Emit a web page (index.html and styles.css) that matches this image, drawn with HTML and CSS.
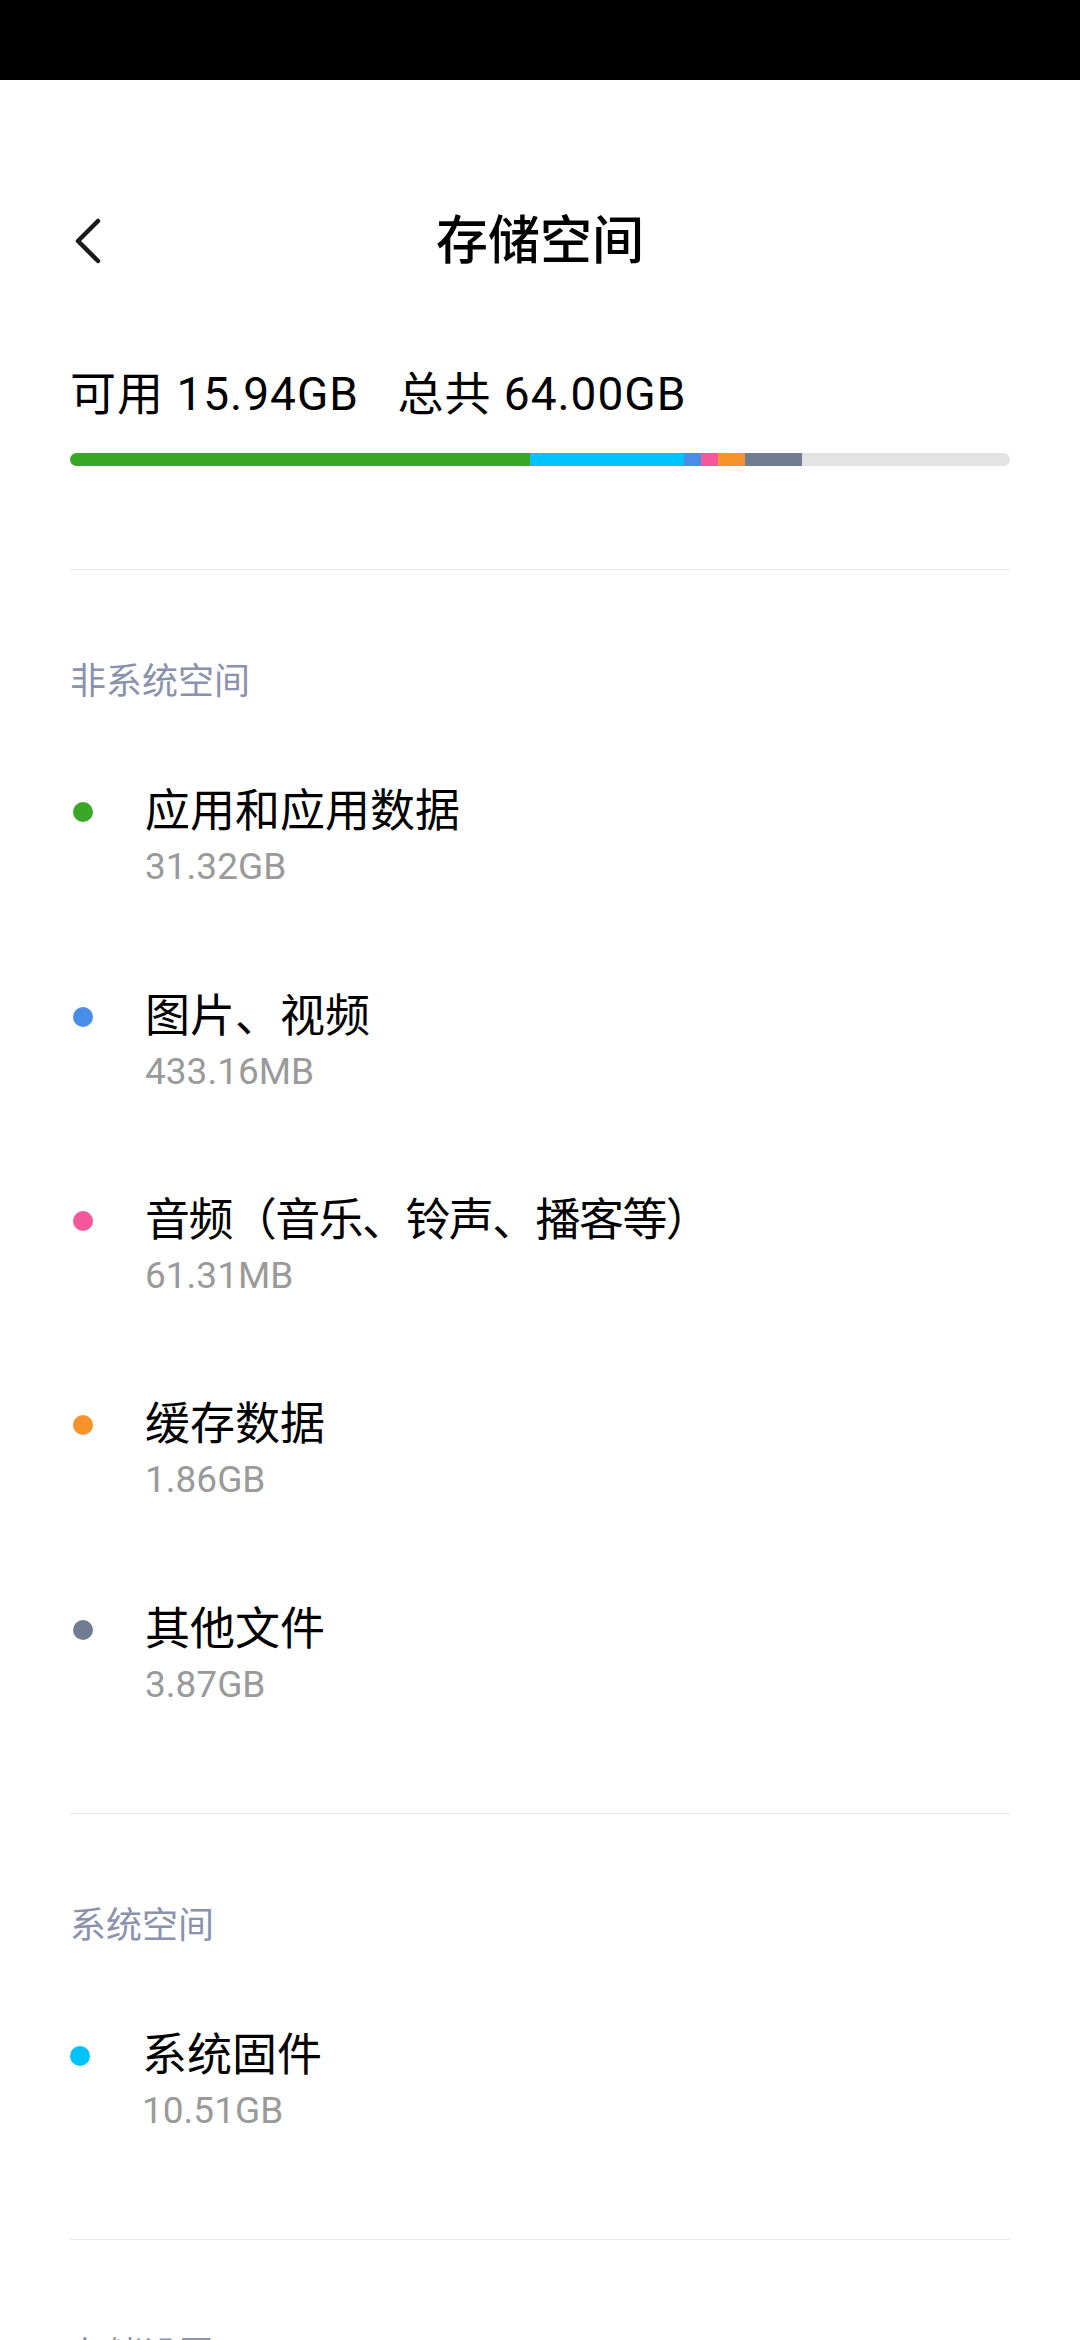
FILE: index.html
```html
<!DOCTYPE html>
<html lang="zh-CN">
<head>
  <meta charset="UTF-8" />
  <title>存储空间</title>
  <link rel="stylesheet" href="styles.css">
</head>
<body>

  <div class="status-bar"></div>

  <div class="page">
    <div class="nav-bar">
      <span class="back-btn">
        <svg width="34" height="48" viewBox="0 0 34 48">
          <path d="M28 4 L8 24 L28 44" fill="none" stroke="#1a1a1a" stroke-width="4.5" stroke-linecap="round" stroke-linejoin="round" />
        </svg>
      </span>
      <h1>存储空间</h1>
      <span></span>
    </div>

    <div class="summary">
      <span>可用 15.94GB</span>
      <span class="summary-total">总共 64.00GB</span>
    </div>

    <!-- usage bar, widths are share of 64GB (tiny ones get a minimum) -->
    <div class="usage-bar">
      <div class="seg green" style="width: 48.9%"></div>
      <div class="seg cyan" style="width: 16.4%"></div>
      <div class="seg blue" style="width: 1.8%"></div>
      <div class="seg pink" style="width: 1.8%"></div>
      <div class="seg orange" style="width: 2.9%"></div>
      <div class="seg gray" style="width: 6.1%"></div>
    </div>

    <div class="section">
      <div class="section-title">非系统空间</div>

      <div class="item">
        <span class="dot green"></span>
        <div class="item-text">
          <div class="item-name">应用和应用数据</div>
          <div class="item-size">31.32GB</div>
        </div>
      </div>

      <div class="item">
        <span class="dot blue"></span>
        <div class="item-text">
          <div class="item-name">图片、视频</div>
          <div class="item-size">433.16MB</div>
        </div>
      </div>

      <div class="item">
        <span class="dot pink"></span>
        <div class="item-text">
          <div class="item-name tight">音频（音乐、铃声、播客等）</div>
          <div class="item-size">61.31MB</div>
        </div>
      </div>

      <div class="item">
        <span class="dot orange"></span>
        <div class="item-text">
          <div class="item-name">缓存数据</div>
          <div class="item-size">1.86GB</div>
        </div>
      </div>

      <div class="item">
        <span class="dot gray"></span>
        <div class="item-text">
          <div class="item-name">其他文件</div>
          <div class="item-size">3.87GB</div>
        </div>
      </div>
    </div>

    <div class="section">
      <div class="section-title">系统空间</div>

      <div class="item item-system">
        <span class="dot cyan"></span>
        <div class="item-text">
          <div class="item-name">系统固件</div>
          <div class="item-size">10.51GB</div>
        </div>
      </div>
    </div>

    <div class="section section-last">
      <div class="section-title">存储设置</div>
    </div>
  </div>

</body>
</html>
```

FILE: styles.css
```css
body {
  margin: 0;
  background-color: white;
  font-family: Roboto, "Noto Sans CJK SC", sans-serif;
  color: #000;
  overflow: hidden;
}

.status-bar {
  height: 80px;
  background-color: #000;
}

.page {
  padding: 0 70px;
}

.nav-bar {
  display: grid;
  grid-template-columns: 1fr auto 1fr;
  align-items: center;
  height: 160px;
  margin-top: 82px;
}

.back-btn {
  display: flex;
  align-items: center;
  margin-top: -3px;
}

.nav-bar h1 {
  margin: 0;
  font-size: 52px;
  font-weight: 500;
  line-height: 60px;
}

.summary {
  margin-top: 42px;
  font-size: 46px;
  line-height: 60px;
  letter-spacing: 1px;
}

.summary-total {
  margin-left: 26px;
}

.usage-bar {
  display: flex;
  height: 13px;
  margin-top: 29px;
  border-radius: 7px;
  overflow: hidden;
  background-color: #e3e3e3;
}

.seg {
  height: 100%;
}

.green { background-color: #3aa827; }
.cyan { background-color: #00c4fd; }
.blue { background-color: #4a8de6; }
.pink { background-color: #f5579b; }
.orange { background-color: #f7932b; }
.gray { background-color: #6f7c93; }

.section {
  border-top: 1px solid #e6e6e6;
  margin-top: 103px;
  padding-top: 87px;
}

.section + .section {
  margin-top: 54px;
}

.section-last {
  padding-top: 91px;
}

.section-title {
  font-size: 36px;
  line-height: 50px;
  color: #8a92ad;
  margin-bottom: 30px;
}

.item {
  display: flex;
  align-items: flex-start;
  padding: 47.2px 0;
}

.item-system {
  margin-left: -3px;
}

.dot {
  width: 20px;
  height: 20px;
  border-radius: 50%;
  margin: 18px 52px 0 3px;
  flex-shrink: 0;
}

.item-name {
  font-size: 45px;
  line-height: 56px;
}

.item-name.tight {
  letter-spacing: -1.6px;
}

.item-size {
  font-size: 37px;
  line-height: 54px;
  color: #9a9a9a;
}
```
